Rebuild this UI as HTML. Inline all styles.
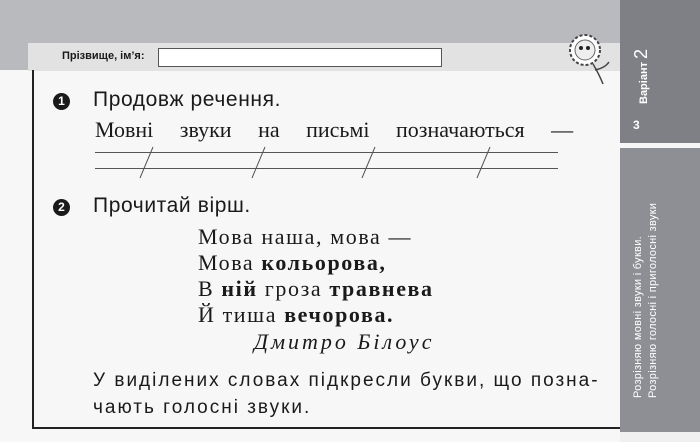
<!DOCTYPE html><html><head><meta charset="utf-8"><style>
body{margin:0;width:700px;height:442px;background:#f7f7f7;position:relative;overflow:hidden;font-family:"Liberation Sans",sans-serif;color:#1a1a1a}
.a{position:absolute}
.s{font-family:"Liberation Serif",serif}
.n{width:17px;height:17px;border-radius:50%;background:#1a1a1a;color:#fff;font-size:12px;font-weight:bold;text-align:center;line-height:17px}
</style></head><body>
<div class="a" style="left:0;top:0;width:620px;height:70px;background:#b9babd"></div>
<div class="a" style="left:28px;top:43px;width:592px;height:28px;background:#e2e2e2"></div>
<div class="a" style="left:62px;top:50px;font-size:11px;font-weight:bold">Прізвище, ім’я:</div>
<div class="a" style="left:158px;top:48px;width:282px;height:17px;background:#fff;border:1px solid #555"></div>
<div class="a" style="left:32px;top:70px;width:2px;height:359px;background:#222"></div>
<div class="a" style="left:32px;top:427px;width:588px;height:2px;background:#222"></div>
<div class="a" style="left:620px;top:0;width:80px;height:143px;background:#7f8085"></div>
<div class="a" style="left:620px;top:148px;width:80px;height:284px;background:#8e8f94"></div>
<div class="a" style="left:620px;top:432px;width:80px;height:10px;background:#f0f0f0"></div>
<div class="a" style="left:631px;top:104px;transform:rotate(-90deg);transform-origin:0 0;color:#fff;font-size:11px;font-weight:bold;white-space:nowrap">Варіант <span style="font-size:18px;font-weight:normal">2</span></div>
<div class="a" style="left:633px;top:118px;color:#fff;font-size:12px;font-weight:bold">3</div>
<div class="a" style="left:631px;top:398px;transform:rotate(-90deg);transform-origin:0 0;color:#fff;font-size:11px;line-height:15px;white-space:nowrap;letter-spacing:.3px">Розрізняю мовні звуки і букви.<br>Розрізняю голосні і приголосні звуки</div>
<svg class="a" style="left:565px;top:26px" width="50" height="60" viewBox="0 0 50 60"><circle cx="20" cy="24" r="15" fill="#fff" stroke="#444" stroke-width="2" stroke-dasharray="3 2"/><circle cx="20" cy="24" r="10" fill="#eee" stroke="#666"/><circle cx="16" cy="22" r="2" fill="#222"/><circle cx="23" cy="22" r="2" fill="#222"/><path d="M28 38 Q34 48 38 58 M30 44 Q40 42 44 36" stroke="#444" fill="none" stroke-width="1.5"/></svg>
<div class="a n" style="left:53px;top:93px">1</div>
<div class="a" style="left:93px;top:88px;font-size:21px;letter-spacing:.6px">Продовж речення.</div>
<div class="a s" style="left:95px;top:117px;font-size:22px;word-spacing:21px;white-space:nowrap">Мовні звуки на письмі позначаються —</div>
<div class="a" style="left:95px;top:152px;width:463px;height:1px;background:#555"></div>
<div class="a" style="left:95px;top:168px;width:463px;height:1px;background:#555"></div>
<svg class="a" style="left:95px;top:145px" width="470" height="35"><g stroke="#555" stroke-width="1"><path d="M58 2L45 33M170 2L157 33M280 2L267 33M395 2L382 33"/></g></svg>
<div class="a n" style="left:53px;top:199px">2</div>
<div class="a" style="left:93px;top:194px;font-size:21px;letter-spacing:.6px">Прочитай вірш.</div>
<div class="a s" style="left:198px;top:224px;font-size:22px;line-height:26px;letter-spacing:1.6px">Мова наша, мова —<br>Мова <b>кольорова,</b><br>В <b>ній</b> гроза <b>травнева</b><br>Й тиша <b>вечорова.</b></div>
<div class="a s" style="left:254px;top:329px;font-size:22px;font-style:italic;letter-spacing:3px">Дмитро Білоус</div>
<div class="a" style="left:93px;top:367px;font-size:19px;line-height:27px;letter-spacing:2px;white-space:nowrap">У виділених словах підкресли букви, що позна-<br>чають голосні звуки.</div>
</body></html>
